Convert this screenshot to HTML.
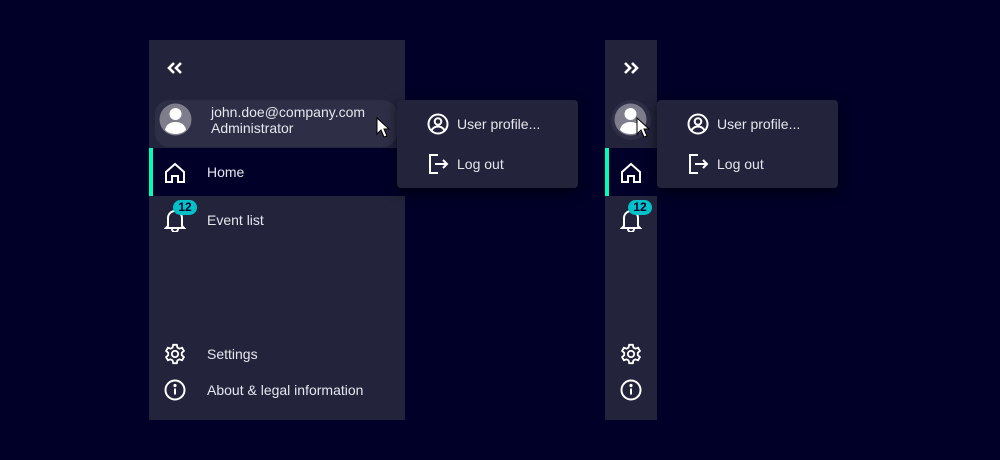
<!DOCTYPE html>
<html><head><style>
body{margin:0;width:1000px;height:460px;background:#000028;position:relative;overflow:hidden;font-family:"Liberation Sans",sans-serif;color:#e6e6ee;font-size:14px}
.a{position:absolute}
.side{background:#23233c;top:40px;height:380px}
.t{position:absolute;line-height:16px;white-space:nowrap}
.menu{background:#23233c;border-radius:4px;box-shadow:0 4px 12px rgba(0,0,0,.6);width:181px;height:88px;top:100px}
.badge{position:absolute;background:#00c1c8;color:#000028;font-weight:bold;font-size:12px;border-radius:8px;height:15px;line-height:15px;width:24px;text-align:center}
</style></head><body>
<!-- left sidebar -->
<div class="a side" style="left:149px;width:256px"></div>
<div class="a" style="left:155px;top:100px;width:242px;height:47px;background:#2e2e46;border-radius:14px"></div>
<div class="a" style="left:149px;top:148px;width:256px;height:48px;background:#000028"></div>
<div class="a" style="left:149px;top:148px;width:4px;height:48px;background:#00ffb9"></div>
<svg class="a" style="left:167px;top:61px" width="16" height="14" viewBox="0 0 16 14" fill="none" stroke="#fff" stroke-width="2.6"><path d="M7 2L2 7l5 5M14 2L9 7l5 5"/></svg>
<svg class="a" style="left:159px;top:103px" width="33" height="33" viewBox="0 0 33 33"><circle cx="16.5" cy="16.5" r="16" fill="#7d7d8c"/><circle cx="16.5" cy="11" r="6" fill="#fff"/><path d="M6 27c1-6 6-8 10.5-8s9.5 2 10.5 8c-3 3-7 4-10.5 4s-7.5-1-10.5-4z" fill="#fff"/></svg>
<div class="t" style="left:211px;top:104px">john.doe@company.com</div>
<div class="t" style="left:211px;top:120px">Administrator</div>
<svg class="a" style="left:376px;top:117px" width="14" height="22" viewBox="0 0 14 22"><path d="M1 1v16l4-4 3 7 3-1-3-7h5z" fill="#fff" stroke="#000" stroke-width="1"/></svg>
<svg class="a" style="left:164px;top:162px" width="22" height="22" viewBox="0 0 22 22" fill="none" stroke="#fff" stroke-width="2"><path d="M2 10L11 2l9 8v10h-6v-6h-6v6H2z"/></svg>
<div class="t" style="left:207px;top:164px">Home</div>
<svg class="a" style="left:164px;top:208px" width="22" height="24" viewBox="0 0 22 24" fill="none" stroke="#fff" stroke-width="2"><path d="M4 18V10a7 7 0 0 1 14 0v8l2 2H2z"/><path d="M8 21a3 3 0 0 0 6 0"/></svg>
<div class="badge" style="left:173px;top:200px">12</div>
<div class="t" style="left:207px;top:212px">Event list</div>
<svg class="a" style="left:164px;top:343px" width="22" height="22" viewBox="0 0 24 24" fill="none" stroke="#fff" stroke-width="2"><circle cx="12" cy="12" r="3.5"/><path d="M10 2h4l.6 3 2.2 1.2 2.9-1 2 3.5-2.3 2v2.6l2.3 2-2 3.5-2.9-1-2.2 1.2-.6 3h-4l-.6-3-2.2-1.2-2.9 1-2-3.5 2.3-2v-2.6l-2.3-2 2-3.5 2.9 1L9.4 5z"/></svg>
<div class="t" style="left:207px;top:346px">Settings</div>
<svg class="a" style="left:164px;top:379px" width="22" height="22" viewBox="0 0 22 22" fill="none" stroke="#fff" stroke-width="2"><circle cx="11" cy="11" r="9.5"/><path d="M11 9.5v6"/><circle cx="11" cy="6.5" r=".6" fill="#fff"/></svg>
<div class="t" style="left:207px;top:382px">About &amp; legal information</div>
<!-- left menu -->
<div class="a menu" style="left:397px"></div>
<svg class="a" style="left:427px;top:113px" width="22" height="22" viewBox="0 0 22 22" fill="none" stroke="#fff" stroke-width="2"><circle cx="11" cy="11" r="9.5"/><circle cx="11" cy="8.5" r="3.3"/><path d="M4.5 17.5c1.5-3 4-4 6.5-4s5 1 6.5 4"/></svg>
<div class="t" style="left:457px;top:116px">User profile...</div>
<svg class="a" style="left:427px;top:153px" width="22" height="22" viewBox="0 0 22 22" fill="none" stroke="#fff" stroke-width="2"><path d="M11 2H3v18h8"/><path d="M8 11h12M16 7l4 4-4 4"/></svg>
<div class="t" style="left:457px;top:156px">Log out</div>
<!-- right sidebar -->
<div class="a side" style="left:605px;width:52px"></div>
<div class="a" style="left:605px;top:148px;width:52px;height:48px;background:#000028"></div>
<div class="a" style="left:605px;top:148px;width:4px;height:48px;background:#00ffb9"></div>
<svg class="a" style="left:623px;top:61px" width="16" height="14" viewBox="0 0 16 14" fill="none" stroke="#fff" stroke-width="2.6"><path d="M2 2l5 5-5 5M9 2l5 5-5 5"/></svg>
<div class="a" style="left:611px;top:100px;width:40px;height:40px;border-radius:20px;background:#2e2e46"></div>
<svg class="a" style="left:614px;top:103px" width="33" height="33" viewBox="0 0 33 33"><circle cx="16.5" cy="16.5" r="16" fill="#7d7d8c"/><circle cx="16.5" cy="11" r="6" fill="#fff"/><path d="M6 27c1-6 6-8 10.5-8s9.5 2 10.5 8c-3 3-7 4-10.5 4s-7.5-1-10.5-4z" fill="#fff"/></svg>
<svg class="a" style="left:636px;top:117px" width="14" height="22" viewBox="0 0 14 22"><path d="M1 1v16l4-4 3 7 3-1-3-7h5z" fill="#fff" stroke="#000" stroke-width="1"/></svg>
<svg class="a" style="left:620px;top:162px" width="22" height="22" viewBox="0 0 22 22" fill="none" stroke="#fff" stroke-width="2"><path d="M2 10L11 2l9 8v10h-6v-6h-6v6H2z"/></svg>
<svg class="a" style="left:620px;top:208px" width="22" height="24" viewBox="0 0 22 24" fill="none" stroke="#fff" stroke-width="2"><path d="M4 18V10a7 7 0 0 1 14 0v8l2 2H2z"/><path d="M8 21a3 3 0 0 0 6 0"/></svg>
<div class="badge" style="left:628px;top:200px">12</div>
<svg class="a" style="left:620px;top:343px" width="22" height="22" viewBox="0 0 24 24" fill="none" stroke="#fff" stroke-width="2"><circle cx="12" cy="12" r="3.5"/><path d="M10 2h4l.6 3 2.2 1.2 2.9-1 2 3.5-2.3 2v2.6l2.3 2-2 3.5-2.9-1-2.2 1.2-.6 3h-4l-.6-3-2.2-1.2-2.9 1-2-3.5 2.3-2v-2.6l-2.3-2 2-3.5 2.9 1L9.4 5z"/></svg>
<svg class="a" style="left:620px;top:379px" width="22" height="22" viewBox="0 0 22 22" fill="none" stroke="#fff" stroke-width="2"><circle cx="11" cy="11" r="9.5"/><path d="M11 9.5v6"/><circle cx="11" cy="6.5" r=".6" fill="#fff"/></svg>
<!-- right menu -->
<div class="a menu" style="left:657px"></div>
<svg class="a" style="left:687px;top:113px" width="22" height="22" viewBox="0 0 22 22" fill="none" stroke="#fff" stroke-width="2"><circle cx="11" cy="11" r="9.5"/><circle cx="11" cy="8.5" r="3.3"/><path d="M4.5 17.5c1.5-3 4-4 6.5-4s5 1 6.5 4"/></svg>
<div class="t" style="left:717px;top:116px">User profile...</div>
<svg class="a" style="left:687px;top:153px" width="22" height="22" viewBox="0 0 22 22" fill="none" stroke="#fff" stroke-width="2"><path d="M11 2H3v18h8"/><path d="M8 11h12M16 7l4 4-4 4"/></svg>
<div class="t" style="left:717px;top:156px">Log out</div>
</body></html>
